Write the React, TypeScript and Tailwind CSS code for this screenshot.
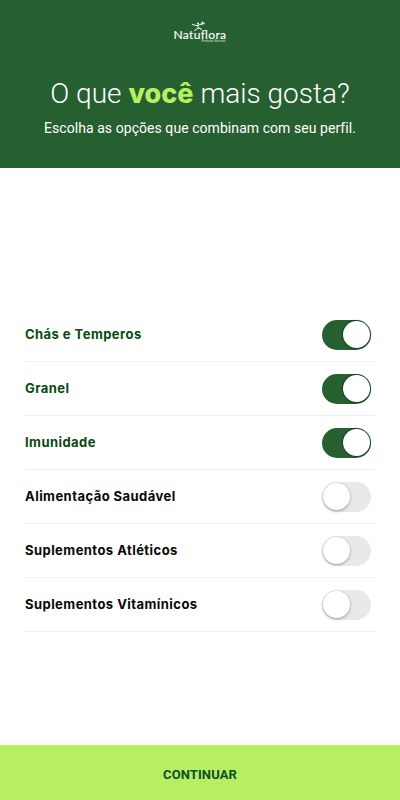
import { useState } from "react";
import clsx from "clsx";

const OPTIONS = [
  { label: "Chás e Temperos", active: true },
  { label: "Granel", active: true },
  { label: "Imunidade", active: true },
  { label: "Alimentação Saudável", active: false },
  { label: "Suplementos Atléticos", active: false },
  { label: "Suplementos Vitamínicos", active: false },
];

function Logo() {
  return (
    <svg width="56" height="24" viewBox="0 0 56 24" fill="none" aria-label="Natuflora">
      <text
        x="1.5"
        y="19"
        fill="#fff"
        stroke="#fff"
        strokeWidth="0.15"
        fontFamily="Lato, sans-serif"
        fontSize="12"
        textLength="52.5"
        lengthAdjust="spacing"
      >
        Natuflora
      </text>
      <text
        x="29.5"
        y="22.3"
        fill="#fff"
        fillOpacity="0.9"
        fontFamily="Lato, sans-serif"
        fontSize="2.8"
        textLength="24"
      >
        Produtos Naturais
      </text>
      {/* figure with branch */}
      <path
        d="M20.5 4.3l2.8 1.2 3.2-.3 4.5-2M25.8 5.4l.4 2.8-2 1.2-1.6 1M26.3 8l2.6.6.3 1.2"
        stroke="#fff"
        strokeWidth="1"
        strokeLinecap="round"
        strokeLinejoin="round"
      />
      <circle cx="26" cy="3.5" r="1" fill="#fff" />
      <circle cx="30.5" cy="2.4" r="0.9" fill="#fff" />
      <circle cx="32" cy="3.6" r="0.8" fill="#fff" />
      <circle cx="30" cy="4.4" r="0.7" fill="#fff" />
    </svg>
  );
}

interface ToggleProps {
  checked: boolean;
  label: string;
  onChange: () => void;
}

function Toggle({ checked, label, onChange }: ToggleProps) {
  return (
    <button
      type="button"
      role="switch"
      aria-checked={checked}
      aria-label={label}
      onClick={onChange}
      className={clsx(
        "flex h-[30px] w-[49px] items-center rounded-full p-px",
        checked ? "justify-end bg-[#265f30]" : "justify-start bg-[#e9e9e9]"
      )}
    >
      <span
        className={clsx(
          "size-[27px] rounded-full bg-white",
          checked
            ? "shadow-[0_0_1px_1px_rgba(0,30,8,0.45)]"
            : "shadow-[0_1px_3px_rgba(0,0,0,0.35)]"
        )}
      />
    </button>
  );
}

export default function App() {
  const [options, setOptions] = useState(OPTIONS);

  const toggle = (index: number) => {
    setOptions(options.map((o, i) => (i === index ? { ...o, active: !o.active } : o)));
  };

  return (
    <div className="flex h-screen flex-col bg-white font-['Roboto',sans-serif]">
      {/* Header */}
      <header className="flex h-[168px] shrink-0 flex-col items-center bg-[#265f30] pt-5 text-white">
        <Logo />
        <h1 className="mt-[30px] text-[28px] leading-10 font-light whitespace-nowrap">
          O que{" "}
          <strong className="font-['Inter',sans-serif] text-[27px] font-extrabold text-[#b5ef62]">
            você
          </strong>{" "}
          mais gosta?
        </h1>
        <p className="mt-1 text-sm leading-5 tracking-[0.06px] whitespace-nowrap">
          Escolha as opções que combinam com seu perfil.
        </p>
      </header>

      {/* Options */}
      <main className="flex-1 px-[25px] pt-[140px]">
        <ul>
          {options.map((option, index) => (
            <li
              key={option.label}
              className="flex h-[54px] items-center justify-between border-b border-[#eeeeee] pr-1"
            >
              <span
                className={clsx(
                  "pt-px font-['Inter',sans-serif] text-[13px] font-bold tracking-[0.45px]",
                  option.active ? "text-[#084a10]" : "text-[#080808]"
                )}
              >
                {option.label}
              </span>
              <Toggle
                checked={option.active}
                label={option.label}
                onChange={() => toggle(index)}
              />
            </li>
          ))}
        </ul>
      </main>

      {/* Footer */}
      <button
        type="button"
        className="h-[55px] shrink-0 bg-[#b7ee63] pt-1 text-[13px] font-bold tracking-[0.1px] text-[#0d4f27]"
      >
        CONTINUAR
      </button>
    </div>
  );
}
